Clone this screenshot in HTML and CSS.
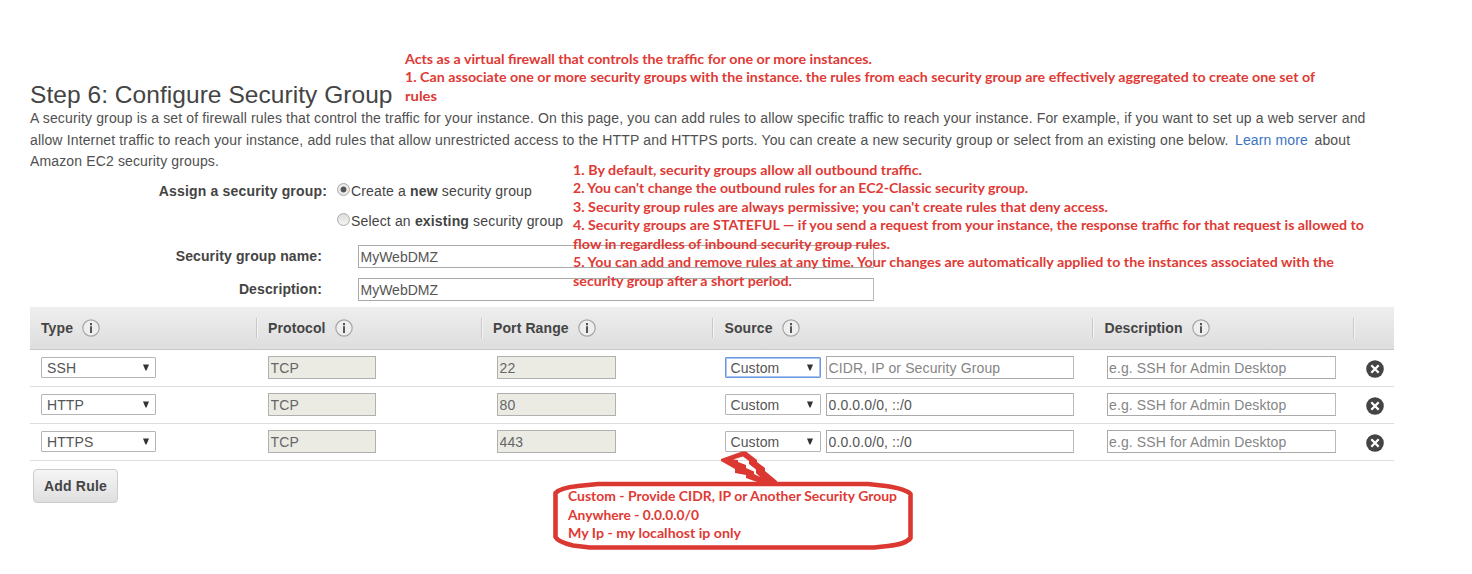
FILE: index.html
```html
<!DOCTYPE html>
<html lang="en">
<head>
<meta charset="utf-8">
<title>Step 6: Configure Security Group</title>
<link rel="stylesheet" href="styles.css">
</head>
<body>
<svg class="defs" width="0" height="0">
  <symbol id="info" viewBox="0 0 18 18"><circle cx="9" cy="9" r="8.2" fill="#eee" stroke="#a6a6a6" stroke-width="1.2"/><path d="M8 4h2v2.200H8zM8 7.300H10V14H8z" fill="#555"/></symbol>
  <symbol id="remove" viewBox="0 0 18 18"><circle cx="9" cy="9" r="8.8" fill="#444"/><path d="M5.3 5.3l7.4 7.4M12.7 5.3l-7.4 7.4" stroke="#fff" stroke-width="2.3"/></symbol>
  <symbol id="arrow" viewBox="0 0 6 7"><path d="M0 .5h6L3.5 6.5H2.500z" fill="#333"/></symbol>
</svg>
<main class="page">
  <h1 class="title">Step 6: Configure Security Group</h1>
  <div class="intro">
    <div class="line line-1">A security group is a set of firewall rules that control the traffic for your instance. On this page, you can add rules to allow specific traffic to reach your instance. For example, if you want to set up a web server and</div>
    <div class="line line-2"><span class="line-main">allow Internet traffic to reach your instance, add rules that allow unrestricted access to the HTTP and HTTPS ports. You can create a new security group or select from an existing one below.</span><a class="link">Learn more</a><span>about</span></div>
    <div class="line line-3">Amazon EC2 security groups.</div>
  </div>
  <form class="form">
    <div class="assign">
      <b class="assign-label">Assign a security group:</b>
      <div class="options">
        <label class="option"><span class="radio on"></span><span>Create a <b>new</b> security group</span></label>
        <label class="option"><span class="radio"></span><span>Select an <b>existing</b> security group</span></label>
      </div>
    </div>
    <div class="field-row"><b class="field-label">Security group name:</b><input class="input wide" value="MyWebDMZ"></div>
    <div class="field-row"><b class="field-label">Description:</b><input class="input wide" value="MyWebDMZ"></div>
  </form>
  <section class="rules">
    <div class="row head">
      <div class="cell">Type<svg class="info"><use href="#info"/></svg></div>
      <div class="cell">Protocol<svg class="info"><use href="#info"/></svg></div>
      <div class="cell port-head">Port Range<svg class="info"><use href="#info"/></svg></div>
      <div class="cell">Source<svg class="info"><use href="#info"/></svg></div>
      <div class="cell">Description<svg class="info"><use href="#info"/></svg></div>
      <div class="cell"></div>
    </div>
    <div class="row">
      <div class="cell"><div class="select type">SSH<svg class="arrow"><use href="#arrow"/></svg></div></div>
      <div class="cell"><input class="input off protocol" value="TCP"></div>
      <div class="cell port"><input class="input off range" value="22"></div>
      <div class="cell source"><div class="select focus">Custom<svg class="arrow"><use href="#arrow"/></svg></div><input class="input address" placeholder="CIDR, IP or Security Group"></div>
      <div class="cell desc"><input class="input note" placeholder="e.g. SSH for Admin Desktop"></div>
      <div class="cell"><svg class="remove"><use href="#remove"/></svg></div>
    </div>
    <div class="row">
      <div class="cell"><div class="select type">HTTP<svg class="arrow"><use href="#arrow"/></svg></div></div>
      <div class="cell"><input class="input off protocol" value="TCP"></div>
      <div class="cell port"><input class="input off range" value="80"></div>
      <div class="cell source"><div class="select">Custom<svg class="arrow"><use href="#arrow"/></svg></div><input class="input address" value="0.0.0.0/0, ::/0"></div>
      <div class="cell desc"><input class="input note" placeholder="e.g. SSH for Admin Desktop"></div>
      <div class="cell"><svg class="remove"><use href="#remove"/></svg></div>
    </div>
    <div class="row">
      <div class="cell"><div class="select type">HTTPS<svg class="arrow"><use href="#arrow"/></svg></div></div>
      <div class="cell"><input class="input off protocol" value="TCP"></div>
      <div class="cell port"><input class="input off range" value="443"></div>
      <div class="cell source"><div class="select">Custom<svg class="arrow"><use href="#arrow"/></svg></div><input class="input address" value="0.0.0.0/0, ::/0"></div>
      <div class="cell desc"><input class="input note" placeholder="e.g. SSH for Admin Desktop"></div>
      <div class="cell"><svg class="remove"><use href="#remove"/></svg></div>
    </div>
  </section>
  <button class="add" type="button">Add Rule</button>
</main>
<svg class="notes" width="1472" height="574" viewBox="0 0 1472 574">
  <g class="note-text">
    <text x="405" y="63.500" textLength="467" lengthAdjust="spacingAndGlyphs">Acts as a virtual firewall that controls the traffic for one or more instances.</text>
    <text x="405" y="82" textLength="910" lengthAdjust="spacingAndGlyphs">1. Can associate one or more security groups with the instance. the rules from each security group are effectively aggregated to create one set of</text>
    <text x="405" y="100.500" textLength="32" lengthAdjust="spacingAndGlyphs">rules</text>
    <text x="573" y="174.500" textLength="349" lengthAdjust="spacingAndGlyphs">1. By default, security groups allow all outbound traffic.</text>
    <text x="573" y="193" textLength="455" lengthAdjust="spacingAndGlyphs">2. You can't change the outbound rules for an EC2-Classic security group.</text>
    <text x="573" y="211.500" textLength="535" lengthAdjust="spacingAndGlyphs">3. Security group rules are always permissive; you can't create rules that deny access.</text>
    <text x="573" y="230" textLength="791" lengthAdjust="spacingAndGlyphs">4. Security groups are STATEFUL — if you send a request from your instance, the response traffic for that request is allowed to</text>
    <text x="573" y="248.500" textLength="317" lengthAdjust="spacingAndGlyphs">flow in regardless of inbound security group rules.</text>
    <text x="573" y="267" textLength="761" lengthAdjust="spacingAndGlyphs">5. You can add and remove rules at any time. Your changes are automatically applied to the instances associated with the</text>
    <text x="573" y="285.500" textLength="219" lengthAdjust="spacingAndGlyphs">security group after a short period.</text>
    <text x="568" y="501" textLength="329" lengthAdjust="spacingAndGlyphs">Custom - Provide CIDR, IP or Another Security Group</text>
    <text x="568" y="519.500" textLength="131" lengthAdjust="spacingAndGlyphs">Anywhere - 0.0.0.0/0</text>
    <text x="568" y="538" textLength="173" lengthAdjust="spacingAndGlyphs">My Ip - my localhost ip only</text>
  </g>
  <path class="frame" d="M598 484H868L886 486Q906 489 910.500 494V538Q906 544 888 546L874 547.500H590L573 545.500Q558 542 555.500 537V493Q560 488 578 486Z"/>
  <path class="bolt" fill-rule="evenodd" d="M721 459L742 451.500H746L757 460V462L765 468V471L777 481V483H760L746 478V475L735 473V469L721 461ZM733 459.500L743 456.500L749 461V464L756 469.500V473L760 477L754 474V471.500L746 468V465L738 462V460Z"/>
</svg>
</body>
</html>
```

FILE: styles.css
```css
* { box-sizing: border-box; }
body { margin: 0; background: #fff; color: #444; font: 14px "Liberation Sans", Arial, sans-serif; }
.defs { position: absolute; }
.page { width: 1472px; height: 574px; padding: 81px 78px 0 30px; overflow: hidden; }
.title { margin: 0; height: 27px; font-size: 24.5px; line-height: 28px; font-weight: 400; white-space: nowrap; letter-spacing: .05px; }
.intro { height: 65px; line-height: 21.5px; color: #505050; }
.line { white-space: nowrap; letter-spacing: .14px; }
.line-1 { width: 1335.500px; text-align-last: justify; white-space: normal; height: 21.5px; }
.line-2 { display: flex; }
.line-main { width: 1198.500px; margin-right: 6.500px; text-align-last: justify; white-space: normal; height: 21.5px; }
.link { color: #3b73c4; width: 73px; margin-right: 6.500px; }
.form { height: 134px; }
.assign { display: flex; height: 66px; padding-top: 10px; }
.assign-label { width: 297px; text-align: right; line-height: 16px; letter-spacing: .17px; }
.options { display: flex; flex-direction: column; gap: 14px; padding-left: 10px; }
.option { display: flex; line-height: 16px; white-space: nowrap; letter-spacing: .16px; }
.radio { width: 13px; height: 13px; border: 1px solid #aaa; border-radius: 50%; background: linear-gradient(#ddd, #f4f4f4); margin-right: 1px; }
.radio.on { background: radial-gradient(circle, #555 0 2.600px, #e8e8e8 3.300px); }
.field-row { display: flex; height: 33px; padding-top: 6px; }
.field-label { width: 292px; text-align: right; line-height: 23px; margin-right: 36px; letter-spacing: .12px; }
.input { display: block; height: 23px; margin: 0; border: 1px solid #aaa; border-right-color: #bbb; border-radius: 0; padding: 0 2px 0 1.500px; font: inherit; letter-spacing: .12px; color: #555; background: #fff; }
.input::placeholder { color: #858585; }
.input.off { background: #ebebe4; color: #666; border-color: #b0b0b0; }
.wide { width: 516px; letter-spacing: 0; }
.rules { width: 1364px; }
.row { display: grid; grid-template-columns: 225.500px 225.500px 231px 380px 261px 41px; height: 37px; border-bottom: 1px solid #ddd; }
.cell { display: flex; padding: 6px 0 0 12.500px; }
.cell:first-child { padding-left: 11px; }
.head { height: 43px; background: linear-gradient(#eee, #dedede); border-bottom-color: #c8c8c8; font-weight: 700; line-height: 20px; letter-spacing: .1px; }
.head .cell { padding-top: 11px; background: linear-gradient(90deg, #c8c8c8 1px, #f5f5f5 1px) 0 11px / 2px 20px no-repeat; }
.head .cell:first-child { background: none; }
.head .port-head { padding-left: 12px; }
.info { width: 18px; height: 18px; margin: 1px 0 0 9px; }
.port { padding-left: 16px; }
.desc { padding-left: 14.500px; }
.protocol { width: 108px; }
.range { width: 119px; }
.address { width: 248px; margin-left: 5.500px; }
.note { width: 229px; }
.select { display: flex; justify-content: space-between; align-items: center; width: 96px; height: 21px; margin-top: 1px; border: 1px solid #b5b5b5; border-radius: 1px; padding: 0 7px 0 5px; color: #555; background: #fff; letter-spacing: .1px; }
.select.type { width: 115px; padding-right: 6px; }
.select.focus { border-color: #6d97e0; box-shadow: inset 0 0 0 1px #a9c4f1; }
.arrow { width: 6px; height: 7px; }
.remove { width: 18px; height: 18px; margin: 4px 0 0; }
.add { display: block; width: 85px; height: 34px; margin: 8px 0 0 3px; padding: 0; border: 1px solid #ccc; border-radius: 4px; background: linear-gradient(#f5f5f5, #dfdfdf); color: #444; font: 700 14px "Liberation Sans", Arial, sans-serif; letter-spacing: .2px; }
.notes { position: absolute; left: 0; top: 0; pointer-events: none; }
.note-text { font: 700 13.800px Lato, sans-serif; fill: #df3a35; }
.frame { fill: none; stroke: #dc3832; stroke-width: 4.600; stroke-linejoin: round; }
.bolt { fill: #dc3832; }
```
